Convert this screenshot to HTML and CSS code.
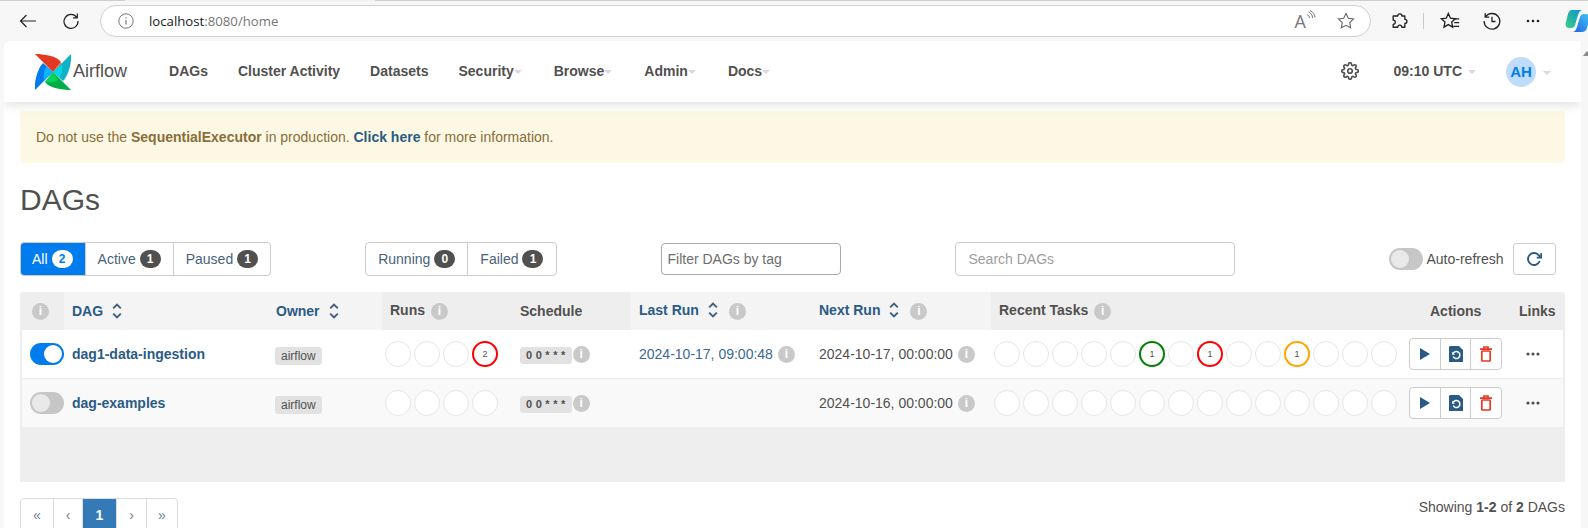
FILE: index.html
```html
<!DOCTYPE html>
<html lang="en">
<head>
<meta charset="utf-8">
<title>DAGs - Airflow</title>
<link rel="stylesheet" href="styles.css">
</head>
<body>
<svg class="defs" width="0" height="0" aria-hidden="true">
  <symbol id="sort" viewBox="0 0 10 16"><path d="M1.2 5.4 5 1.6l3.8 3.8M1.2 10.6 5 14.4l3.8-3.8" fill="none" stroke="currentColor" stroke-width="1.9"/></symbol>
  <symbol id="play" viewBox="0 0 10 12"><path d="M0 0l10 6-10 6z" fill="#2a5b85"/></symbol>
  <symbol id="doc" viewBox="0 0 14 16"><path d="M1 0H10l4 4v12H0V1z" fill="#2a5b85"/><path d="M4.300 7.300A3.500 3.500 0 1 1 4.200 10.500" fill="none" stroke="#fff" stroke-width="1.500"/><path d="M3 5.800v3h3z" fill="#fff"/></symbol>
  <symbol id="trash" viewBox="0 0 14 16"><path d="M1 3.200h12M5 2.200V1h4v1.200" fill="none" stroke="#e43921" stroke-width="1.700"/><rect x="2.800" y="5" width="8.400" height="10" rx=".8" fill="none" stroke="#e43921" stroke-width="1.700"/></symbol>
  <symbol id="dots" viewBox="0 0 14 4"><circle cx="2" cy="2" r="1.600" fill="#51504f"/><circle cx="7" cy="2" r="1.600" fill="#51504f"/><circle cx="12" cy="2" r="1.600" fill="#51504f"/></symbol>
</svg>
<header class="browser">
  <span class="tab-gap"></span>
  <span class="tb-btn tb-back"><svg width="18" height="14" viewBox="0 0 18 14"><path d="M17 7H1.500M7.500 1 1.500 7l6 6" fill="none" stroke="#222" stroke-width="1.200"/></svg></span>
  <span class="tb-btn tb-reload"><svg width="18" height="18" viewBox="0 0 18 18"><path d="M14.800 5.500A7 7 0 1 0 16 9M15.300 1.500v4.300H11" fill="none" stroke="#222" stroke-width="1.200"/></svg></span>
  <div class="address">
    <svg class="addr-info" width="16" height="16" viewBox="0 0 16 16"><circle cx="8" cy="8" r="7.200" fill="none" stroke="#777" stroke-width="1"/><path d="M8 7v4.600M8 4.200v1.300" stroke="#777" stroke-width="1.200"/></svg>
    <span class="url"><span class="url-host">localhost</span>:8080/home</span>
    <span class="read"><span class="read-a">A</span><svg width="10" height="13" viewBox="0 0 10 13"><path d="M1 4.500c1.500.5 2.500 2 2.500 3.500M2.500 2c2.500 1 4 3 4 6M4 .5c3 1.500 5 4 5 7" fill="none" stroke="#777" stroke-width="1"/></svg></span>
    <svg class="addr-star" width="18" height="18" viewBox="0 0 24 24"><polygon points="12 2 15.090 8.260 22 9.270 17 14.140 18.180 21.020 12 17.770 5.820 21.020 7 14.140 2 9.270 8.910 8.260" fill="none" stroke="#666" stroke-width="1.500"/></svg>
  </div>
  <span class="tb-btn tb-ext"><svg width="20" height="20" viewBox="0 0 24 24"><path d="M8 6h2.500a2.500 2.500 0 0 1 5 0H19v4a2.500 2.500 0 0 1 0 5v4.500h-3.500a2.500 2.500 0 0 0-5 0H5V16a2.500 2.500 0 0 0 0-5V6z" fill="none" stroke="#222" stroke-width="1.600" stroke-linejoin="round"/></svg></span>
  <span class="tb-sep"></span>
  <span class="tb-btn tb-fav"><svg width="20" height="20" viewBox="0 0 24 24"><path d="M10 3l2.500 5.600 6 .7-4.500 4 1.200 6-5.200-3-5.200 3 1.200-6-4.500-4 6-.7z" fill="none" stroke="#222" stroke-width="1.600"/><path d="M16 9.500h7M17 14h6M16 18.500h7" stroke="#222" stroke-width="1.600"/></svg></span>
  <span class="tb-btn tb-hist"><svg width="18" height="18" viewBox="0 0 18 18"><path d="M2.500 5A7.800 7.800 0 1 1 1.200 9M2.200 1.200v4h4M9 4.800V9.500h3.500" fill="none" stroke="#222" stroke-width="1.300"/></svg></span>
  <span class="tb-btn tb-more"><svg width="14" height="4" viewBox="0 0 14 4"><circle cx="2" cy="2" r="1.300" fill="#222"/><circle cx="7" cy="2" r="1.300" fill="#222"/><circle cx="12" cy="2" r="1.300" fill="#222"/></svg></span>
  <svg class="copilot" width="24" height="24" viewBox="0 0 24 24">
    <defs>
      <linearGradient id="cpa" x1="0" y1="1" x2="1" y2="0"><stop offset="0" stop-color="#3ccf7e"/><stop offset="1" stop-color="#0a8fd8"/></linearGradient>
      <linearGradient id="cpb" x1="0" y1="1" x2="1" y2="0"><stop offset="0" stop-color="#1f5fe0"/><stop offset="1" stop-color="#42c4f5"/></linearGradient>
    </defs>
    <path d="M7 1h11c-3 0-4 2-5 5l-3 10c-.5 2-2 3-4 3H4c-3 0-4-3-3-6L3 5c.7-2.500 2-4 4-4z" fill="url(#cpa)"/>
    <path d="M17 23H7c3 0 4-2 5-5l3-10c.5-2 2-3 4-3h2c3 0 4 3 3 6l-2 8c-.7 2.500-3 4-5 4z" fill="url(#cpb)"/>
  </svg>
</header>
<div class="window">
  <main class="page">
    <nav class="navbar">
      <a class="brand">
        <svg class="pinwheel" width="36" height="36" viewBox="0 0 36 36">
          <path d="M0 0C9 0 22 2 26 8L18 18z" fill="#e43921"/>
          <path d="M26 8c1.500 3 .5 6-1 7.500L18 18z" fill="#ff7557"/>
          <path d="M36 0C37 9 33 22 28 27L18 18z" fill="#11b2c9"/>
          <path d="M27 10 18 18l6.500 5.500C27 20 27.500 14 27 10z" fill="#00d7e8"/>
          <path d="M36 36C27 36 14 34 10 28L18 18z" fill="#00ad46"/>
          <path d="M10 28c3-3 6-7 8-10l5 8c-4 2-9 3-13 2z" fill="#04d659"/>
          <path d="M0 36C-1 27 3 14 8 9L18 18z" fill="#017cee"/>
          <path d="M9 26 18 18 11.500 12.500C9 16 8.500 22 9 26z" fill="#0cb6ff"/>
        </svg>
        <span class="brand-name">Airflow</span>
      </a>
      <ul class="menu">
        <li>DAGs</li>
        <li>Cluster Activity</li>
        <li>Datasets</li>
        <li>Security<i class="caret"></i></li>
        <li>Browse<i class="caret"></i></li>
        <li>Admin<i class="caret"></i></li>
        <li>Docs<i class="caret"></i></li>
      </ul>
      <svg class="gear" width="18" height="18" viewBox="0 0 24 24"><g fill="none" stroke="#51504f" stroke-width="2.200"><path d="M12 15a3 3 0 1 0 0-6 3 3 0 0 0 0 6z"/><path d="M19.400 15a1.650 1.650 0 0 0 .33 1.820l.06.06a2 2 0 0 1 0 2.830 2 2 0 0 1-2.830 0l-.06-.06a1.650 1.650 0 0 0-1.820-.33 1.650 1.650 0 0 0-1 1.510V21a2 2 0 0 1-2 2 2 2 0 0 1-2-2v-.09A1.650 1.650 0 0 0 9 19.400a1.650 1.650 0 0 0-1.820.33l-.06.06a2 2 0 0 1-2.830 0 2 2 0 0 1 0-2.830l.06-.06a1.650 1.650 0 0 0 .33-1.820 1.650 1.650 0 0 0-1.510-1H3a2 2 0 0 1-2-2 2 2 0 0 1 2-2h.09A1.650 1.650 0 0 0 4.600 9a1.650 1.650 0 0 0-.33-1.820l-.06-.06a2 2 0 0 1 0-2.830 2 2 0 0 1 2.830 0l.06.06a1.650 1.650 0 0 0 1.820.33H9a1.650 1.650 0 0 0 1-1.510V3a2 2 0 0 1 2-2 2 2 0 0 1 2 2v.09a1.650 1.650 0 0 0 1 1.510 1.650 1.650 0 0 0 1.820-.33l.06-.06a2 2 0 0 1 2.830 0 2 2 0 0 1 0 2.830l-.06.06a1.650 1.650 0 0 0-.33 1.820V9a1.650 1.650 0 0 0 1.510 1H21a2 2 0 0 1 2 2 2 2 0 0 1-2 2h-.09a1.650 1.650 0 0 0-1.510 1z"/></g></svg>
      <span class="clock">09:10 UTC<i class="caret caret-wide"></i></span>
      <span class="avatar">AH</span><i class="caret caret-user"></i>
    </nav>
    <div class="content">
      <div class="alert">Do not use the <strong>SequentialExecutor</strong> in production. <a class="alert-link">Click here</a> for more information.</div>
      <h1 class="title">DAGs</h1>
      <div class="controls">
        <div class="group">
          <span class="seg seg-on">All <b class="badge badge-on">2</b></span>
          <span class="seg">Active <b class="badge">1</b></span>
          <span class="seg">Paused <b class="badge">1</b></span>
        </div>
        <div class="group group-status">
          <span class="seg">Running <b class="badge">0</b></span>
          <span class="seg seg-failed">Failed <b class="badge">1</b></span>
        </div>
        <div class="field field-tag">Filter DAGs by tag</div>
        <div class="field field-search">Search DAGs</div>
        <div class="auto"><span class="toggle"><i class="knob"></i></span><span class="auto-label">Auto-refresh</span></div>
        <span class="refresh"><svg width="16" height="16" viewBox="0 0 24 24"><path d="M23 3v7h-7M20.490 15a9 9 0 1 1-2.120-9.360L23 10" fill="none" stroke="#2a5b85" stroke-width="2.800"/></svg></span>
      </div>
      <div class="table-wrap">
        <table class="dags">
          <thead>
            <tr>
              <th class="c-toggle"><span class="info">i</span></th>
              <th class="c-dag sortable">DAG<svg class="sort"><use href="#sort"/></svg></th>
              <th class="c-owner sortable">Owner<svg class="sort"><use href="#sort"/></svg></th>
              <th class="c-runs">Runs<span class="info info-th">i</span></th>
              <th class="c-sched">Schedule</th>
              <th class="c-last sortable">Last Run<svg class="sort"><use href="#sort"/></svg><span class="info info-sort">i</span></th>
              <th class="c-next sortable">Next Run<svg class="sort"><use href="#sort"/></svg><span class="info info-sort">i</span></th>
              <th class="c-tasks">Recent Tasks<span class="info info-th">i</span></th>
              <th class="c-actions">Actions</th>
              <th class="c-links">Links</th>
            </tr>
          </thead>
          <tbody>
            <tr>
              <td class="cell-toggle"><span class="toggle toggle-on"><i class="knob"></i></span></td>
              <td><a class="dag-name">dag1-data-ingestion</a></td>
              <td><span class="pill">airflow</span></td>
              <td class="cell-dots"><div class="dots-row"><i class="dot"></i><i class="dot"></i><i class="dot"></i><i class="dot dot-red">2</i></div></td>
              <td><div class="sched"><span class="cron">0 0 * * *</span><span class="info">i</span></div></td>
              <td><div class="when"><a class="date-link">2024-10-17, 09:00:48</a><span class="info">i</span></div></td>
              <td><div class="when">2024-10-17, 00:00:00<span class="info">i</span></div></td>
              <td class="cell-dots"><div class="dots-row"><i class="dot"></i><i class="dot"></i><i class="dot"></i><i class="dot"></i><i class="dot"></i><i class="dot dot-green">1</i><i class="dot"></i><i class="dot dot-red">1</i><i class="dot"></i><i class="dot"></i><i class="dot dot-orange">1</i><i class="dot"></i><i class="dot"></i><i class="dot"></i></div></td>
              <td class="cell-actions"><div class="actions"><span class="act"><svg width="10" height="12"><use href="#play"/></svg></span><span class="act"><svg width="14" height="16"><use href="#doc"/></svg></span><span class="act"><svg width="14" height="16"><use href="#trash"/></svg></span></div></td>
              <td class="cell-links"><svg class="more" width="14" height="4"><use href="#dots"/></svg></td>
            </tr>
            <tr class="alt">
              <td class="cell-toggle"><span class="toggle"><i class="knob"></i></span></td>
              <td><a class="dag-name">dag-examples</a></td>
              <td><span class="pill">airflow</span></td>
              <td class="cell-dots"><div class="dots-row"><i class="dot"></i><i class="dot"></i><i class="dot"></i><i class="dot"></i></div></td>
              <td><div class="sched"><span class="cron">0 0 * * *</span><span class="info">i</span></div></td>
              <td></td>
              <td><div class="when">2024-10-16, 00:00:00<span class="info">i</span></div></td>
              <td class="cell-dots"><div class="dots-row"><i class="dot"></i><i class="dot"></i><i class="dot"></i><i class="dot"></i><i class="dot"></i><i class="dot"></i><i class="dot"></i><i class="dot"></i><i class="dot"></i><i class="dot"></i><i class="dot"></i><i class="dot"></i><i class="dot"></i><i class="dot"></i></div></td>
              <td class="cell-actions"><div class="actions"><span class="act"><svg width="10" height="12"><use href="#play"/></svg></span><span class="act"><svg width="14" height="16"><use href="#doc"/></svg></span><span class="act"><svg width="14" height="16"><use href="#trash"/></svg></span></div></td>
              <td class="cell-links"><svg class="more" width="14" height="4"><use href="#dots"/></svg></td>
            </tr>
          </tbody>
        </table>
      </div>
      <div class="foot">
        <ul class="pager">
          <li class="pg-first">«</li>
          <li class="pg-prev">‹</li>
          <li class="pg-cur">1</li>
          <li class="pg-next">›</li>
          <li class="pg-last">»</li>
        </ul>
        <p class="showing">Showing <b>1-2</b> of <b>2</b> DAGs</p>
      </div>
    </div>
  </main>
  <aside class="scrollbar"><i class="scroll-up"></i></aside>
</div>
</body>
</html>
```

FILE: styles.css
```css
* { box-sizing: border-box; }
html, body { height: 528px; overflow: hidden; }
body {
  margin: 0;
  background: #f7f7f7;
  font-family: "Liberation Sans", Arial, sans-serif;
  font-size: 14px;
  color: #51504f;
}
.defs { display: block; height: 0; }
ul { list-style: none; margin: 0; padding: 0; }

/* browser chrome */
.browser {
  position: relative;
  display: flex;
  align-items: center;
  height: 41px;
  padding-bottom: 1px;
  border-top: 1px solid #cfcfcf;
  background: #f7f7f7;
}
.tab-gap { position: absolute; left: 125px; top: -1px; width: 250px; height: 1px; background: #f0f0f0; }
.tb-btn { display: flex; align-items: center; justify-content: center; width: 36px; height: 32px; flex: none; }
.tb-back { margin-left: 10px; }
.tb-reload { margin-left: 7px; }
.address {
  display: flex;
  align-items: center;
  flex: none;
  width: 1271px;
  height: 32px;
  margin-left: 11px;
  padding: 0 14px 0 17px;
  background: #fff;
  border: 1px solid #d0d0d0;
  border-radius: 16px;
}
.url { margin-left: 15px; font-family: "Open Sans", sans-serif; font-size: 13.200px; color: #767676; }
.url-host { color: #1a1a1a; }
.read { display: flex; align-items: flex-start; margin-left: auto; color: #777; }
.read-a { font-family: "Open Sans", sans-serif; font-size: 18px; line-height: 22px; }
.addr-star { margin-left: 21px; margin-right: 1px; }
.tb-ext { margin-left: 10px; }
.tb-sep { width: 1px; height: 16px; margin-left: 6px; background: #c8c8c8; flex: none; }
.tb-fav { margin-left: 8px; }
.tb-hist { margin-left: 6px; }
.tb-more { margin-left: 5px; }
.copilot { margin-left: 14px; flex: none; }

.window { display: flex; height: 487px; }
.page {
  flex: none;
  width: 1577px;
  margin-left: 4px;
  background: #fff;
  border-top-left-radius: 6px;
  overflow: hidden;
}
.scrollbar { flex: 1; background: #f7f7f7; position: relative; }
.scroll-up { position: absolute; top: 10px; left: 2px; border: 4px solid transparent; border-top: 0; border-bottom: 5px solid #8a8a8a; }

/* airflow nav */
.navbar {
  position: relative;
  display: flex;
  align-items: center;
  height: 61px;
  padding-left: 31px;
  background: #fff;
  box-shadow: 0 3px 10px rgba(0, 0, 0, .12);
}
.brand { display: flex; align-items: center; }
.pinwheel { flex: none; }
.brand-name { margin-left: 2px; font-size: 18px; color: #51504f; }
.menu { display: flex; gap: 30px; margin: -2px 0 0 42px; font-weight: 700; }
.menu li { display: flex; align-items: center; white-space: nowrap; }
.caret {
  display: inline-block;
  width: 0;
  height: 0;
  margin-top: 2px;
  margin-right: 2px;
  border-left: 4px solid transparent;
  border-right: 4px solid transparent;
  border-top: 4px solid #e2d2e2;
}
.gear { margin: -2px 0 0 auto; flex: none; }
.clock { display: flex; align-items: center; margin: -2px 0 0 35px; font-weight: 700; }
.caret-wide { margin-left: 6px; margin-right: 0; }
.avatar {
  display: flex;
  align-items: center;
  justify-content: center;
  width: 30px;
  height: 30px;
  margin-left: 30px;
  border-radius: 50%;
  background: #bfdcfb;
  color: #017cee;
  font-size: 15px;
  font-weight: 700;
}
.caret-user { margin-left: 7px; margin-right: 30px; }

/* content */
.content { padding: 9px 16px 0; }
.alert {
  height: 52px;
  padding: 0 16px;
  line-height: 52px;
  background: #fcf8e3;
  border-radius: 4px;
  color: #8a6d3b;
}
.alert-link { font-weight: 700; color: #2a5b85; }
.title { margin: 20px 0 0; font-size: 30px; font-weight: 400; line-height: 34px; color: #51504f; }

.controls { display: flex; align-items: center; height: 34px; margin-top: 25px; color: #48637d; }
.group { display: flex; flex: none; height: 34px; border: 1px solid #ccc; border-radius: 4px; overflow: hidden; }
.group-status { margin-left: 94px; }
.seg { display: flex; align-items: center; gap: 4px; padding: 0 12px; border-left: 1px solid #ccc; white-space: nowrap; }
.seg:first-child { border-left: 0; }
.seg-on { margin: -1px 0 -1px -1px; padding-left: 12px; background: #017cee; color: #fff; }
.seg-failed { padding-right: 13px; }
.badge {
  display: block;
  width: 21px;
  height: 18px;
  border-radius: 9px;
  background: #51504f;
  color: #fff;
  font-size: 12px;
  line-height: 18px;
  text-align: center;
}
.badge-on { background: #fff; color: #017cee; }
.field { display: flex; align-items: center; flex: none; border-radius: 4px; }
.field-tag { width: 180px; height: 32px; margin-left: 104px; padding-left: 5px; border: 1px solid #a9a9a9; color: #6e6e6e; }
.field-search { width: 280px; height: 34px; margin-left: 114px; padding-left: 12px; border: 1px solid #ccc; color: #9e9e9e; }
.auto { display: flex; align-items: center; margin-left: 154px; color: #51504f; }
.auto-label { margin-left: 3px; }
.refresh {
  display: flex;
  align-items: center;
  justify-content: center;
  width: 43px;
  height: 32px;
  margin-left: 9px;
  border: 1px solid #ccc;
  border-radius: 3px;
}

.toggle {
  display: flex;
  align-items: center;
  flex: none;
  width: 34px;
  height: 22px;
  padding: 2px;
  border-radius: 11px;
  background: #c6c6c6;
}
.knob { display: block; width: 18px; height: 18px; border-radius: 50%; background: #e9e9e9; }
.toggle-on { justify-content: flex-end; background: #017cee; }
.toggle-on .knob { background: #fff; }

/* table */
.table-wrap { height: 190px; margin-top: 16px; padding: 0 2px; background: #eee; border-radius: 3px 3px 0 0; }
.dags { width: 1541px; table-layout: fixed; border-collapse: separate; border-spacing: 0; }
.dags th {
  height: 38px;
  padding: 0 0 0 8px;
  text-align: left;
  font-weight: 700;
  white-space: nowrap;
  color: #51504f;
}
.dags th.sortable { background: #f4f4f4; color: #2a5b85; }
.dags td { height: 49px; padding: 0 0 0 8px; background: #fff; border-bottom: 1px solid #eee; white-space: nowrap; }
.dags tr.alt td { height: 48px; background: #f9f9f9; border-bottom: 0; }
.c-toggle { width: 42px; }
.c-dag { width: 204px; }
.c-owner { width: 114px; }
.c-runs { width: 130px; }
.c-sched { width: 119px; }
.c-last, .c-next { width: 180px; }
.c-tasks { width: 408px; }
.c-actions { width: 111px; }
.c-links { width: 53px; }
.dags th.c-toggle { padding-left: 10px; }
.dags th.c-actions { padding-left: 31px; }
.dags th.c-links { padding-left: 9px; }

.info {
  display: inline-block;
  width: 17px;
  height: 17px;
  border-radius: 50%;
  background: #c9c9c9;
  color: #fff;
  font-size: 12px;
  font-weight: 700;
  line-height: 17px;
  text-align: center;
  vertical-align: 0;
}
.info-th { margin-left: 6px; }
.info-sort { margin-left: 11px; }
.sort { display: inline-block; width: 10px; height: 16px; margin-left: 9px; vertical-align: -3px; color: #3f5f7d; }

.dags td.cell-toggle { padding-left: 8px; }
.dag-name { font-weight: 700; color: #2a5b85; }
.pill { display: block; width: fit-content; height: 18px; margin: 4px 0 0 -1px; padding: 0 6px; border-radius: 3px; background: #e2e2e2; font-size: 12px; line-height: 18px; color: #51504f; }
.sched, .when { display: flex; align-items: center; }
.cron { height: 17px; margin-top: 3px; padding: 0 6px; border-radius: 3px; background: #e2e2e2; font-size: 11px; font-weight: 700; letter-spacing: .25px; line-height: 17px; }
.sched .info { margin-left: 1px; }
.when .info { margin-left: 5px; }
.date-link { color: #3a6a92; }
.dags td.cell-dots { padding-left: 3px; }
.dots-row { display: flex; gap: 3px; }
.dot {
  display: flex;
  align-items: center;
  justify-content: center;
  flex: none;
  width: 26px;
  height: 26px;
  border: 1.500px solid #e6e6e6;
  border-radius: 50%;
  background: #fff;
  font-size: 9px;
  font-style: normal;
  color: #51504f;
}
.dot-red { border: 2px solid #f00; }
.dot-green { border: 2px solid #008000; }
.dot-orange { border: 2px solid #ffa500; }
.dags td.cell-actions { padding-left: 10px; }
.actions { display: flex; width: 93px; height: 32px; border: 1px solid #ccc; border-radius: 4px; background: #fff; }
.act { display: flex; align-items: center; justify-content: center; flex: 1; border-left: 1px solid #ccc; }
.act:first-child { border-left: 0; }
.dags td.cell-links { padding-left: 16px; }
.more { display: block; }

/* footer */
.foot { display: flex; justify-content: space-between; align-items: flex-start; margin-top: 16px; }
.pager { display: flex; height: 34px; border: 1px solid #ddd; border-radius: 4px; color: #6f7d8b; overflow: hidden; }
.pager li { display: flex; align-items: center; justify-content: center; border-left: 1px solid #ddd; }
.pager li:first-child { border-left: 0; }
.pg-first { width: 32px; }
.pg-prev { width: 29px; }
.pg-cur { width: 34px; background: #337ab7; color: #fff; font-weight: 700; }
.pg-next { width: 30px; }
.pg-last { width: 31px; }
.showing { margin: 0; line-height: 19px; color: #51504f; }
```
